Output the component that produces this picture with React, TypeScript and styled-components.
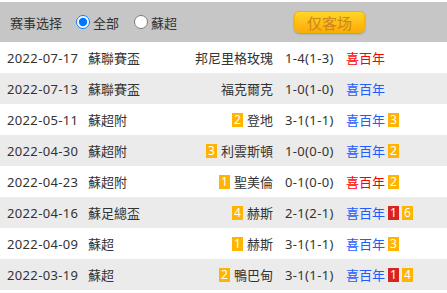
import styled, { createGlobalStyle } from "styled-components";

const Global = createGlobalStyle`
    body {
        margin: 0;
        background: #fff;
        font-family: "Noto Sans", "Noto Sans CJK SC", sans-serif;
    }
`

const Page = styled.div`
    width: 447px;
    padding-top: 2px;
`

const Toolbar = styled.div`
    height: 40px;
    background: #c6c6c6;
    display: flex;
    align-items: center;
    padding-left: 10px;
    font-size: 13px;
    color: #333;
`

const Label = styled.span`
    margin-right: 14px;
`

const Choice = styled.label`
    display: flex;
    align-items: center;
    margin-right: 15px;
    input {
        width: 14px;
        height: 14px;
        margin: 0 3px 0 0;
        accent-color: #0075ff;
    }
`

const AwayButton = styled.button`
    margin-left: 102px;
    width: 71px;
    height: 22px;
    border: 1px solid #f4b400;
    border-radius: 5px;
    background: linear-gradient(#ffd628, #ffaa08);
    box-shadow: 0 1px 2px rgba(0, 0, 0, 0.25);
    color: #c8891a;
    font-family: "Noto Sans CJK SC", sans-serif;
    font-size: 15px;
    padding: 0;
`

const Row = styled.div<{ $alt: boolean }>`
    height: 31px;
    display: grid;
    grid-template-columns: 81px 72px 113px 73px auto;
    align-items: center;
    padding-left: 7px;
    padding-right: 12px;
    background: ${p => (p.$alt ? "#ebebeb" : "#fff")};
    font-size: 13px;
    color: #333;
    white-space: nowrap;
`

const Num = styled.div`
    letter-spacing: 0.35px;
`

const Team = styled.div`
    display: flex;
    justify-content: flex-end;
    align-items: center;
    gap: 4px;
`

const Score = styled(Num)`
    padding-left: 12px;
`

const Club = styled.div<{ $red: boolean }>`
    display: flex;
    align-items: center;
    gap: 3px;
    color: ${p => (p.$red ? "#ff0000" : "#1f5cff")};
`

const Badge = styled.span<{ $red?: boolean }>`
    display: inline-flex;
    align-items: center;
    justify-content: center;
    width: 11px;
    height: 14px;
    background: ${p => (p.$red ? "#d9231f" : "#ffb400")};
    color: #fff;
    font-size: 12px;
    line-height: 1;
`

type Match = {
    date: string
    league: string
    team: string
    rank?: string
    score: string
    red: boolean
    cards: { n: string, red?: boolean }[]
}

const matches: Match[] = [
    { date: "2022-07-17", league: "蘇聯賽盃", team: "邦尼里格玫瑰", score: "1-4(1-3)", red: true, cards: [] },
    { date: "2022-07-13", league: "蘇聯賽盃", team: "福克爾克", score: "1-0(1-0)", red: false, cards: [] },
    { date: "2022-05-11", league: "蘇超附", team: "登地", rank: "2", score: "3-1(1-1)", red: false, cards: [{ n: "3" }] },
    { date: "2022-04-30", league: "蘇超附", team: "利雲斯頓", rank: "3", score: "1-0(0-0)", red: false, cards: [{ n: "2" }] },
    { date: "2022-04-23", league: "蘇超附", team: "聖美倫", rank: "1", score: "0-1(0-0)", red: true, cards: [{ n: "2" }] },
    { date: "2022-04-16", league: "蘇足總盃", team: "赫斯", rank: "4", score: "2-1(2-1)", red: false, cards: [{ n: "1", red: true }, { n: "6" }] },
    { date: "2022-04-09", league: "蘇超", team: "赫斯", rank: "1", score: "3-1(1-1)", red: false, cards: [{ n: "3" }] },
    { date: "2022-03-19", league: "蘇超", team: "鴨巴甸", rank: "2", score: "3-1(1-1)", red: false, cards: [{ n: "1", red: true }, { n: "4" }] },
]

export default function App() {
    return (
        <Page>
            <Global />
            <Toolbar>
                <Label>赛事选择</Label>
                <Choice><input type="radio" name="lg" defaultChecked />全部</Choice>
                <Choice><input type="radio" name="lg" />蘇超</Choice>
                <AwayButton>仅客场</AwayButton>
            </Toolbar>
            {matches.map((m, i) => (
                <Row key={m.date} $alt={i % 2 === 1}>
                    <Num>{m.date}</Num>
                    <div>{m.league}</div>
                    <Team>
                        {m.rank && <Badge>{m.rank}</Badge>}
                        {m.team}
                    </Team>
                    <Score>{m.score}</Score>
                    <Club $red={m.red}>
                        喜百年
                        {m.cards.map((c, j) => <Badge key={j} $red={c.red}>{c.n}</Badge>)}
                    </Club>
                </Row>
            ))}
        </Page>
    )
}
